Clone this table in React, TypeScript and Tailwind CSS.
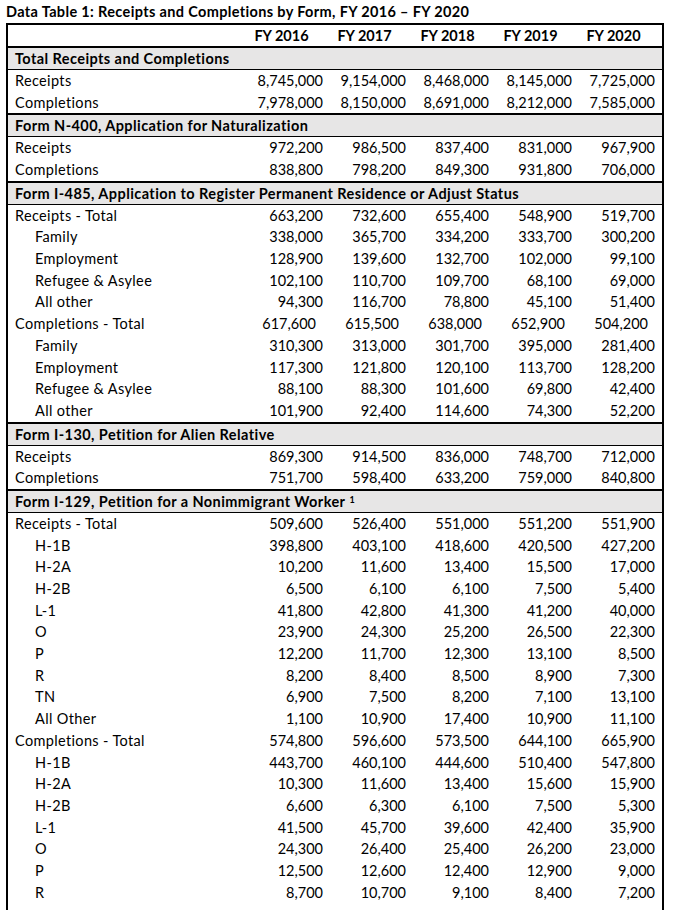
type Row = { label: string; values: string[]; indent?: boolean; shift?: boolean };
type Section = { title: string; note?: string; rows: Row[] };

const sections: Section[] = [
  {
    title: "Total Receipts and Completions",
    rows: [
      { label: "Receipts", values: ["8,745,000", "9,154,000", "8,468,000", "8,145,000", "7,725,000"] },
      { label: "Completions", values: ["7,978,000", "8,150,000", "8,691,000", "8,212,000", "7,585,000"] },
    ],
  },
  {
    title: "Form N-400, Application for Naturalization",
    rows: [
      { label: "Receipts", values: ["972,200", "986,500", "837,400", "831,000", "967,900"] },
      { label: "Completions", values: ["838,800", "798,200", "849,300", "931,800", "706,000"] },
    ],
  },
  {
    title: "Form I-485, Application to Register Permanent Residence or Adjust Status",
    rows: [
      { label: "Receipts - Total", values: ["663,200", "732,600", "655,400", "548,900", "519,700"] },
      { label: "Family", indent: true, values: ["338,000", "365,700", "334,200", "333,700", "300,200"] },
      { label: "Employment", indent: true, values: ["128,900", "139,600", "132,700", "102,000", "99,100"] },
      { label: "Refugee & Asylee", indent: true, values: ["102,100", "110,700", "109,700", "68,100", "69,000"] },
      { label: "All other", indent: true, values: ["94,300", "116,700", "78,800", "45,100", "51,400"] },
      { label: "Completions - Total", shift: true, values: ["617,600", "615,500", "638,000", "652,900", "504,200"] },
      { label: "Family", indent: true, values: ["310,300", "313,000", "301,700", "395,000", "281,400"] },
      { label: "Employment", indent: true, values: ["117,300", "121,800", "120,100", "113,700", "128,200"] },
      { label: "Refugee & Asylee", indent: true, values: ["88,100", "88,300", "101,600", "69,800", "42,400"] },
      { label: "All other", indent: true, values: ["101,900", "92,400", "114,600", "74,300", "52,200"] },
    ],
  },
  {
    title: "Form I-130, Petition for Alien Relative",
    rows: [
      { label: "Receipts", values: ["869,300", "914,500", "836,000", "748,700", "712,000"] },
      { label: "Completions", values: ["751,700", "598,400", "633,200", "759,000", "840,800"] },
    ],
  },
  {
    title: "Form I-129, Petition for a Nonimmigrant Worker",
    note: "1",
    rows: [
      { label: "Receipts - Total", values: ["509,600", "526,400", "551,000", "551,200", "551,900"] },
      { label: "H-1B", indent: true, values: ["398,800", "403,100", "418,600", "420,500", "427,200"] },
      { label: "H-2A", indent: true, values: ["10,200", "11,600", "13,400", "15,500", "17,000"] },
      { label: "H-2B", indent: true, values: ["6,500", "6,100", "6,100", "7,500", "5,400"] },
      { label: "L-1", indent: true, values: ["41,800", "42,800", "41,300", "41,200", "40,000"] },
      { label: "O", indent: true, values: ["23,900", "24,300", "25,200", "26,500", "22,300"] },
      { label: "P", indent: true, values: ["12,200", "11,700", "12,300", "13,100", "8,500"] },
      { label: "R", indent: true, values: ["8,200", "8,400", "8,500", "8,900", "7,300"] },
      { label: "TN", indent: true, values: ["6,900", "7,500", "8,200", "7,100", "13,100"] },
      { label: "All Other", indent: true, values: ["1,100", "10,900", "17,400", "10,900", "11,100"] },
      { label: "Completions - Total", values: ["574,800", "596,600", "573,500", "644,100", "665,900"] },
      { label: "H-1B", indent: true, values: ["443,700", "460,100", "444,600", "510,400", "547,800"] },
      { label: "H-2A", indent: true, values: ["10,300", "11,600", "13,400", "15,600", "15,900"] },
      { label: "H-2B", indent: true, values: ["6,600", "6,300", "6,100", "7,500", "5,300"] },
      { label: "L-1", indent: true, values: ["41,500", "45,700", "39,600", "42,400", "35,900"] },
      { label: "O", indent: true, values: ["24,300", "26,400", "25,400", "26,200", "23,000"] },
      { label: "P", indent: true, values: ["12,500", "12,600", "12,400", "12,900", "9,000"] },
      { label: "R", indent: true, values: ["8,700", "10,700", "9,100", "8,400", "7,200"] },
    ],
  },
];

const years = ["FY 2016", "FY 2017", "FY 2018", "FY 2019", "FY 2020"];

export default function App() {
  return (
    <div className="min-h-screen bg-white text-black font-['Lato',sans-serif] text-[14.5px]">
      <div className="w-[677px] pl-[6px]">
        {/* Title */}
        <div className="h-[23px] leading-[23px] font-bold tracking-[0.35px]">
          Data Table 1: Receipts and Completions by Form, FY 2016 – FY 2020
        </div>

        <div className="w-[658px] border-x-2 border-t-2 border-black pb-[40px]">
          {/* Year header */}
          <div className="flex h-[21px] items-center font-bold">
            <div className="flex-1" />
            {years.map((y) => (
              <div key={y} className="w-[83px] text-center">
                {y}
              </div>
            ))}
            <div className="w-[7px]" />
          </div>

          {sections.map((s) => (
            <div key={s.title}>
              <div className="h-[24px] border-t-2 border-b border-black bg-[#e7e6e6] pl-[7px] font-bold leading-[21px] tracking-[0.42px]">
                {s.title}
                {s.note && <sup className="ml-[4px] text-[9px] font-bold">{s.note}</sup>}
              </div>
              {s.rows.map((r, i) => (
                <div key={i} className="flex h-[21.7px] items-center">
                  <div className={`flex-1 tracking-[0.35px] ${r.indent ? "pl-[27px]" : "pl-[7px]"}`}>{r.label}</div>
                  {r.values.map((v, j) => (
                    <div key={j} className={`w-[83px] text-right ${r.shift ? "pr-[7px]" : ""}`}>
                      {v}
                    </div>
                  ))}
                  <div className="w-[7px]" />
                </div>
              ))}
            </div>
          ))}
        </div>
      </div>
    </div>
  );
}
